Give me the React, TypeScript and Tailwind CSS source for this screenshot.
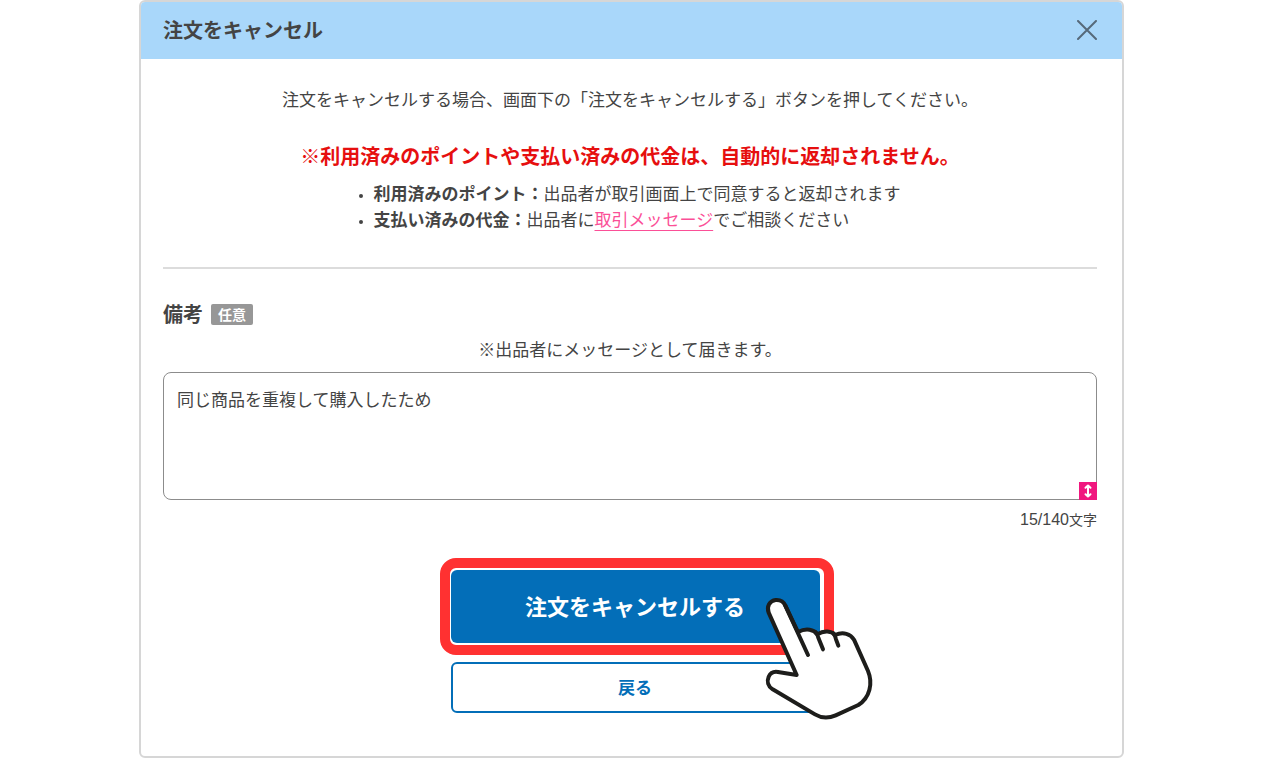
import React, { useState } from "react";

const MAX_LENGTH = 140;

const HandPointer = () => (
  <svg
    viewBox="0 0 450 450"
    className="pointer-events-none absolute -right-14 top-[27px] w-[150px]"
    fill="none"
    stroke="#1d1d1b"
    strokeWidth="12"
    strokeLinecap="round"
    strokeLinejoin="round"
    aria-hidden="true"
  >
    <path
      fill="#fff"
      d="M170 270 L86 83 C79 65 89 47 107 45 C120 44 131 50 136 62 L174 141 C199 128 222 134 232 148 C252 135 275 138 285 150 C310 139 332 147 342 164 L384 258 C399 294 390 338 355 360 L287 391 C264 401 243 399 225 388 L98 313 C84 304 80 289 86 275 C91 264 102 259 114 261 Z"
    />
    <path d="M136 62 L204 210" />
    <path d="M226 141 Q232 147 235 158 L249 193" />
    <path d="M280 145 Q285 151 288 163 L295 182" />
  </svg>
);

const App = () => {
  const [note, setNote] = useState("同じ商品を重複して購入したため");

  return (
    <div className="bg-white pr-3.5 font-['Noto_Sans_CJK_JP',sans-serif] text-[17px] leading-[26px] text-[#444]">
      <div className="mx-auto max-w-[985px] overflow-hidden rounded-md border-2 border-[#d6d6d6] bg-white">
        {/* Header */}
        <header className="flex items-center justify-between bg-[#a9d7fa] pb-[15px] pl-[22px] pr-[25px] pt-[13px]">
          <h1 className="text-[20px] font-bold leading-[29px]">
            注文をキャンセル
          </h1>
          <button type="button" aria-label="閉じる">
            <svg
              viewBox="0 0 20 20"
              className="size-5"
              fill="none"
              stroke="#56697a"
              strokeWidth="2"
              strokeLinecap="round"
            >
              <path d="M1 1 L19 19 M19 1 L1 19" />
            </svg>
          </button>
        </header>

        <main className="pb-[43px] pl-[22px] pr-[25px] pt-[27px]">
          <p className="text-center">
            注文をキャンセルする場合、画面下の「注文をキャンセルする」ボタンを押してください。
          </p>
          <p className="mt-7 text-center text-[20px] font-bold leading-8 text-[#e60f0f]">
            ※利用済みのポイントや支払い済みの代金は、自動的に返却されません。
          </p>
          <ul className="mx-auto mt-2 w-fit list-disc pl-[18px] pr-1 marker:text-[11px]">
            <li>
              <b>利用済みのポイント：</b>
              出品者が取引画面上で同意すると返却されます
            </li>
            <li>
              <b>支払い済みの代金：</b>
              出品者に
              <a
                href="#message"
                className="text-[#fb4f97] underline decoration-[#fb4f97] underline-offset-4"
              >
                取引メッセージ
              </a>
              でご相談ください
            </li>
          </ul>

          <hr className="mt-[35px] border-t-2 border-[#dcdcdc]" />

          {/* Note */}
          <div className="mt-[31px] flex items-center gap-2">
            <label htmlFor="note" className="text-[20px] font-bold leading-7">
              備考
            </label>
            <span className="rounded-xs bg-[#979797] px-[7px] text-[14px] font-bold leading-[21px] text-white">
              任意
            </span>
          </div>
          <p className="mt-2 text-center">
            ※出品者にメッセージとして届きます。
          </p>
          <div className="relative mt-2.5">
            <textarea
              id="note"
              maxLength={MAX_LENGTH}
              value={note}
              onChange={(e) => setNote(e.target.value)}
              className="block h-32 w-full resize-none rounded-lg border border-[#8c8c8c] px-[13px] py-[13px] outline-none"
            />
            <span className="absolute bottom-0 right-0 flex size-[18px] items-center justify-center bg-[#f0187f]">
              <svg
                viewBox="0 0 10 14"
                className="h-3.5 w-2.5"
                fill="none"
                stroke="#fff"
                strokeWidth="2"
                strokeLinecap="round"
                strokeLinejoin="round"
              >
                <path d="M5 2 V12 M2.5 3.8 L5 1.5 L7.5 3.8 M2.5 10.2 L5 12.5 L7.5 10.2" />
              </svg>
            </span>
          </div>
          <p className="mt-2 text-right text-[14px] leading-[22px]">
            <span className="font-['Liberation_Sans',sans-serif] text-[16px]">
              {note.length}/{MAX_LENGTH}
            </span>
            文字
          </p>

          {/* Buttons */}
          <div className="mt-[27px] pl-[13px]">
            <div className="relative mx-auto max-w-[394px]">
              <div className="rounded-2xl border-10 border-[#ff3131] py-0.5 pl-px pr-1">
                <button
                  type="button"
                  className="block h-[73px] w-full rounded-md bg-[#036eb8] pb-1 text-[22px] font-bold text-white"
                >
                  注文をキャンセルする
                </button>
              </div>
              <div className="mt-[7px] pl-[11px] pr-3.5">
                <button
                  type="button"
                  className="block h-[51px] w-full rounded-md border-2 border-[#036eb8] bg-white pb-0.5 font-bold text-[#036eb8]"
                >
                  戻る
                </button>
              </div>
              <HandPointer />
            </div>
          </div>
        </main>
      </div>
    </div>
  );
};

export default App;
